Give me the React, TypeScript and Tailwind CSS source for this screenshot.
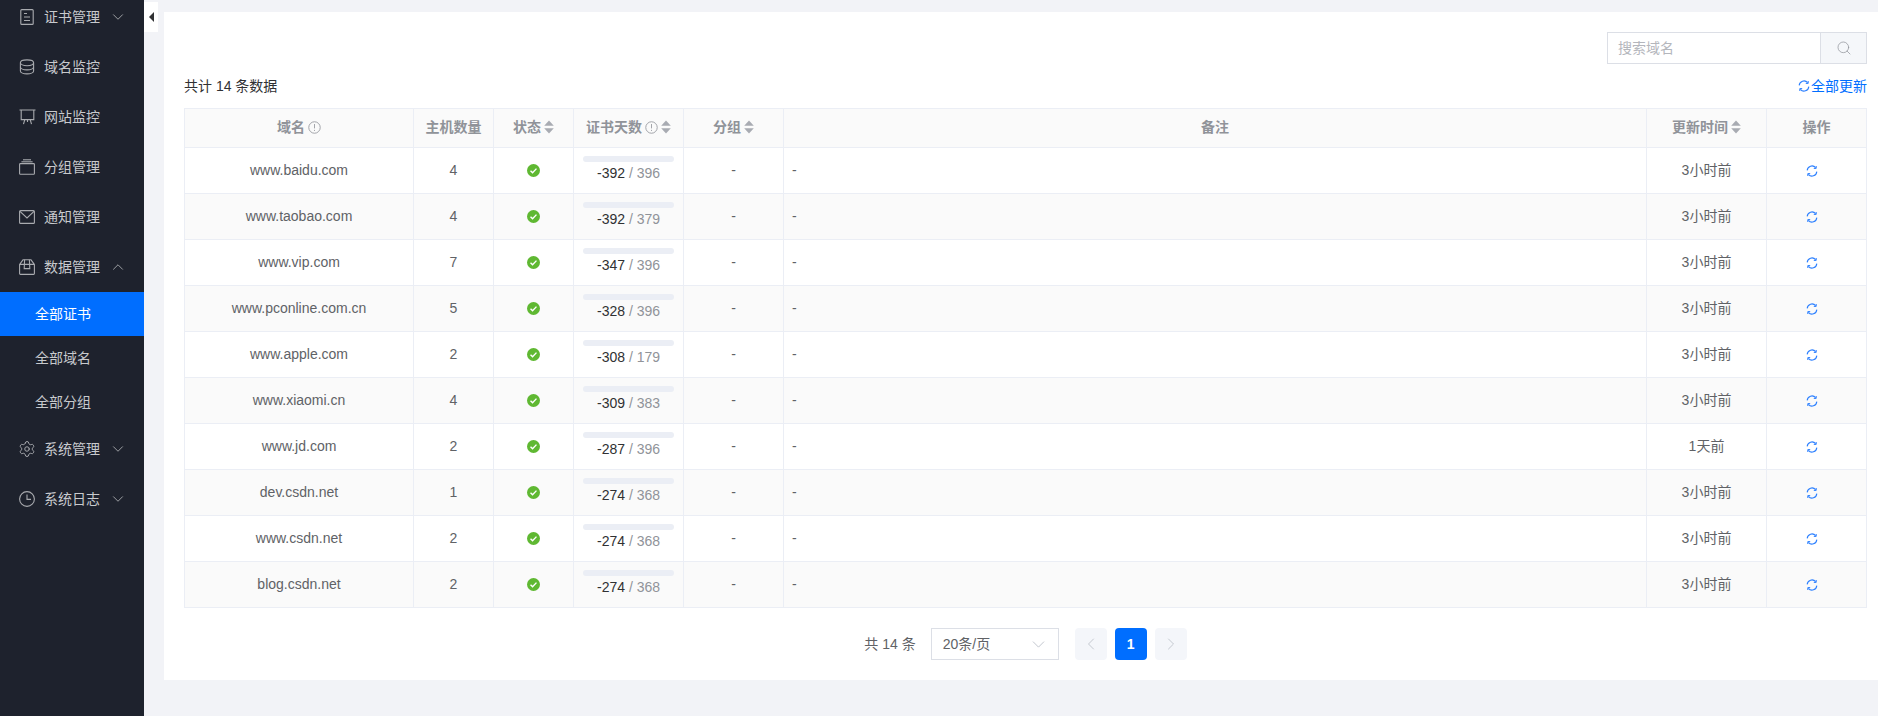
import { ReactNode } from "react";
import { ChevronDown, ChevronUp, ChevronLeft, ChevronRight, Search, Settings } from "lucide-react";

const FONT = "font-['Liberation_Sans','Noto_Sans_CJK_SC',sans-serif]";

const rows = [
  { domain: "www.baidu.com", hosts: 4, days: -392, total: 396, updated: "3小时前" },
  { domain: "www.taobao.com", hosts: 4, days: -392, total: 379, updated: "3小时前" },
  { domain: "www.vip.com", hosts: 7, days: -347, total: 396, updated: "3小时前" },
  { domain: "www.pconline.com.cn", hosts: 5, days: -328, total: 396, updated: "3小时前" },
  { domain: "www.apple.com", hosts: 2, days: -308, total: 179, updated: "3小时前" },
  { domain: "www.xiaomi.cn", hosts: 4, days: -309, total: 383, updated: "3小时前" },
  { domain: "www.jd.com", hosts: 2, days: -287, total: 396, updated: "1天前" },
  { domain: "dev.csdn.net", hosts: 1, days: -274, total: 368, updated: "3小时前" },
  { domain: "www.csdn.net", hosts: 2, days: -274, total: 368, updated: "3小时前" },
  { domain: "blog.csdn.net", hosts: 2, days: -274, total: 368, updated: "3小时前" },
];

const DocIcon = () => (
  <svg viewBox="0 0 16 16" className="h-4 w-4" fill="none" stroke="currentColor" strokeWidth="1.1">
    <rect x="1.8" y="0.6" width="12.4" height="14.8" rx="1" />
    <path d="M5 4.5h3M5 8h6M5 11.5h6" />
  </svg>
);

const CoinIcon = () => (
  <svg viewBox="0 0 16 16" className="h-4 w-4" fill="none" stroke="currentColor" strokeWidth="1.1">
    <ellipse cx="8" cy="3.8" rx="6.6" ry="2.9" />
    <path d="M1.4 3.8v8.2c0 1.6 3 2.9 6.6 2.9s6.6-1.3 6.6-2.9V3.8" />
    <path d="M1.4 8c0 1.6 3 2.9 6.6 2.9s6.6-1.3 6.6-2.9" />
  </svg>
);

const BoardIcon = () => (
  <svg viewBox="0 0 17 16" className="h-4 w-[17px]" fill="none" stroke="currentColor" strokeWidth="1.1">
    <path d="M0.5 1h16M2.2 1v9.6h12.6V1M5.8 10.6l-1.3 4.6M11.2 10.6l1.3 4.6M8.5 10.6v2.4" />
  </svg>
);

const StackIcon = () => (
  <svg viewBox="0 0 16 16" className="h-4 w-4" fill="none" stroke="currentColor" strokeWidth="1.1">
    <rect x="0.6" y="4.6" width="14.8" height="10.6" rx="0.8" />
    <path d="M2.4 2.8h11.2" />
    <path d="M4 0.8h8" />
  </svg>
);

const MailIcon = () => (
  <svg viewBox="0 0 16 16" className="h-4 w-4" fill="none" stroke="currentColor" strokeWidth="1.1">
    <rect x="0.6" y="1.6" width="14.8" height="12.8" rx="1" />
    <path d="M1 2.4l7 6.6 7-6.6" />
  </svg>
);

const BoxIcon = () => (
  <svg viewBox="0 0 16 16" className="h-4 w-4" fill="none" stroke="currentColor" strokeWidth="1.1">
    <path d="M0.6 5.4v9.2a.8.8 0 0 0 .8.8h13.2a.8.8 0 0 0 .8-.8V5.4L12 .8H4L0.6 5.4zM0.6 5.4h14.8" />
    <path d="M5.6 .8L5.2 9.6h5.6L10.4.8" />
  </svg>
);

const ClockIcon = () => (
  <svg viewBox="0 0 16 16" className="h-4 w-4" fill="none" stroke="currentColor" strokeWidth="1.1">
    <circle cx="8" cy="8" r="7.4" />
    <path d="M8 3.4V8.4h4" />
  </svg>
);

const RefreshIcon = ({ className }: { className: string }) => (
  <svg viewBox="0 0 12 12" className={className} fill="none" stroke="currentColor" strokeWidth="1.1">
    <path d="M1.2 5.4A4.8 4.8 0 0 1 9.6 2.6" />
    <path d="M10.8 6.6A4.8 4.8 0 0 1 2.4 9.4" />
    <path d="M10.2 1v2.4H7.8" strokeWidth="1" />
    <path d="M1.8 11V8.6h2.4" strokeWidth="1" />
  </svg>
);

const InfoIcon = () => (
  <svg viewBox="0 0 12 12" className="h-[13px] w-[13px] text-[#a0a2a8]" fill="none" stroke="currentColor" strokeWidth="0.9">
    <circle cx="6" cy="6" r="5.3" />
    <path d="M6 2.8v4M6 8.2v1" />
  </svg>
);

const SortIcon = () => (
  <svg viewBox="0 0 10 14" className="h-[14px] w-[10px] text-[#a8abb2]" fill="currentColor">
    <path d="M5 0.5L9.8 5.8H0.2z" />
    <path d="M5 13.5L0.2 8.2H9.8z" />
  </svg>
);

const CheckIcon = () => (
  <svg viewBox="0 0 14 14" className="h-[13px] w-[13px]">
    <circle cx="7" cy="7" r="7" fill="#5fb832" />
    <path d="M3.8 7.2l2.2 2.2 4.2-4.4" fill="none" stroke="#fff" strokeWidth="1.5" />
  </svg>
);

const NavItem = ({ icon, label, arrow }: { icon: ReactNode; label: string; arrow?: "up" | "down" }) => (
  <div className="flex h-[50px] items-center pl-[19px] text-[#c8cacd]">
    <span className="flex w-[25px] shrink-0 text-[#a9abaf]">{icon}</span>
    <span className="text-sm">{label}</span>
    {arrow === "down" && <ChevronDown className="ml-[9px] h-[18px] w-[18px] text-[#a9abaf]" strokeWidth={1.2} />}
    {arrow === "up" && <ChevronUp className="ml-[9px] h-[18px] w-[18px] text-[#a9abaf]" strokeWidth={1.2} />}
  </div>
);

const SubItem = ({ label, active }: { label: string; active?: boolean }) => (
  <div className={`flex h-11 items-center pl-[35px] text-sm ${active ? "bg-[#006eff] text-white" : "text-[#c8cacd]"}`}>
    {label}
  </div>
);

const Sidebar = () => (
  <aside className="h-full w-36 shrink-0 overflow-hidden bg-[#1e222d]">
    <div className="-mt-2">
      <NavItem icon={<DocIcon />} label="证书管理" arrow="down" />
      <NavItem icon={<CoinIcon />} label="域名监控" />
      <NavItem icon={<BoardIcon />} label="网站监控" />
      <NavItem icon={<StackIcon />} label="分组管理" />
      <NavItem icon={<MailIcon />} label="通知管理" />
      <NavItem icon={<BoxIcon />} label="数据管理" arrow="up" />
      <SubItem label="全部证书" active />
      <SubItem label="全部域名" />
      <SubItem label="全部分组" />
      <NavItem icon={<Settings className="h-[18px] w-[18px] -ml-px" strokeWidth={1.3} />} label="系统管理" arrow="down" />
      <NavItem icon={<ClockIcon />} label="系统日志" arrow="down" />
    </div>
  </aside>
);

const Th = ({ children }: { children: ReactNode }) => (
  <th className="border border-[#ebeef5] bg-[#fafafa] p-0 pb-0.5 text-sm font-bold text-[#909399]">
    <div className="flex items-center justify-center gap-[3px]">{children}</div>
  </th>
);

const Td = ({ children, left }: { children: ReactNode; left?: boolean }) => (
  <td className={`border border-[#ebeef5] p-0 pb-0.5 text-sm text-[#606266] ${left ? "pl-2 text-left" : "text-center"}`}>
    {children}
  </td>
);

const CertTable = () => (
  <table className="w-[1683px] table-fixed border-collapse">
    <colgroup>
      <col className="w-[229px]" />
      <col className="w-20" />
      <col className="w-20" />
      <col className="w-[110px]" />
      <col className="w-[100px]" />
      <col />
      <col className="w-[120px]" />
      <col className="w-[100px]" />
    </colgroup>
    <thead>
      <tr className="h-[39px]">
        <Th>域名 <InfoIcon /></Th>
        <Th>主机数量</Th>
        <Th>状态 <SortIcon /></Th>
        <Th>证书天数 <InfoIcon /> <SortIcon /></Th>
        <Th>分组 <SortIcon /></Th>
        <Th>备注</Th>
        <Th>更新时间 <SortIcon /></Th>
        <Th>操作</Th>
      </tr>
    </thead>
    <tbody>
      {rows.map((row, i) => (
        <tr key={row.domain} className={`h-[46px] ${i % 2 === 1 ? "bg-[#fafafa]" : "bg-white"}`}>
          <Td>{row.domain}</Td>
          <Td>{row.hosts}</Td>
          <Td>
            <div className="flex justify-center pt-0.5">
              <CheckIcon />
            </div>
          </Td>
          <Td>
            <div className="h-[27px]">
              <div className="mx-[9px] h-1.5 rounded-full bg-[#ebeef5]" />
              <div className="mt-px leading-5">
                <span className="text-[#303133]">{row.days}</span>
                <span className="text-[#909399]"> / {row.total}</span>
              </div>
            </div>
          </Td>
          <Td>-</Td>
          <Td left>-</Td>
          <Td>{row.updated}</Td>
          <Td>
            <div className="flex justify-center pr-[10px] pt-0.5 text-[#2b7fff]">
              <RefreshIcon className="h-3 w-3" />
            </div>
          </Td>
        </tr>
      ))}
    </tbody>
  </table>
);

const Pager = () => (
  <div className="mt-[20px] flex items-center justify-center text-sm text-[#606266]">
    <span className="mr-[15px]">共 14 条</span>
    <div className="mr-4 flex h-8 w-32 items-center justify-between border border-[#dcdfe6] pl-[11px] pr-[9px]">
      <span>20条/页</span>
      <ChevronDown className="h-[21px] w-[21px] text-[#c0c4cc]" strokeWidth={1.1} />
    </div>
    <div className="flex h-8 w-8 items-center justify-center rounded-sm bg-[#f4f6fa] text-[#c0c4cc]">
      <ChevronLeft className="h-5 w-5" strokeWidth={1.1} />
    </div>
    <div className="mx-2 flex h-8 w-8 items-center justify-center rounded-sm bg-[#006eff] text-sm font-bold text-white">
      1
    </div>
    <div className="flex h-8 w-8 items-center justify-center rounded-sm bg-[#f4f6fa] text-[#c0c4cc]">
      <ChevronRight className="h-5 w-5" strokeWidth={1.1} />
    </div>
  </div>
);

const App = () => (
  <div className={`${FONT} flex h-[716px] overflow-hidden bg-[#f2f3f7]`}>
    <Sidebar />
    <main className="relative flex-1 pl-5 pt-3">
      <div className="absolute left-0 top-0.5 flex h-[30px] w-3.5 items-center justify-center bg-white">
        <div className="h-0 w-0 border-y-[5px] border-r-[5px] border-y-transparent border-r-[#303133]" />
      </div>
      <section className="h-[668px] bg-white pl-5 pr-[11px] pt-5">
        <div className="flex justify-end">
          <div className="flex h-8 w-[260px] border border-[#dcdfe6]">
            <div className="flex flex-1 items-center pl-2.5 text-sm text-[#b4b6bc]">搜索域名</div>
            <div className="flex w-[46px] items-center justify-center border-l border-[#dcdfe6] bg-[#f5f7fa] text-[#909399]">
              <Search className="h-4 w-4" strokeWidth={1.1} />
            </div>
          </div>
        </div>
        <div className="mb-3 mt-3 flex h-5 items-center justify-between text-sm">
          <span className="text-[#303133]">共计 14 条数据</span>
          <span className="flex items-center gap-px text-[#006eff]">
            <RefreshIcon className="h-3 w-3 text-[#2b7fff]" />
            全部更新
          </span>
        </div>
        <CertTable />
        <Pager />
      </section>
    </main>
  </div>
);

export default App;
